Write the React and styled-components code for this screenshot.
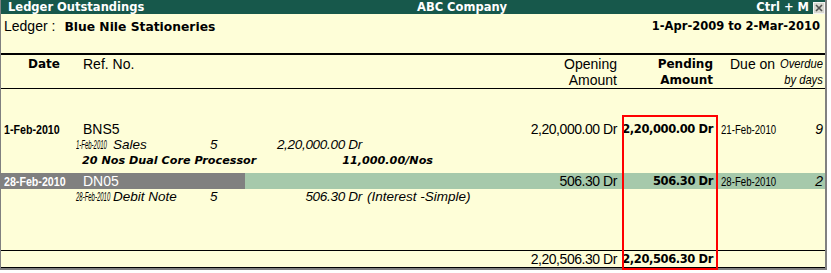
import React from 'react'
import styled, { createGlobalStyle } from 'styled-components'

const SANS = `"Liberation Sans", Arial, sans-serif`
const HEAVY = `"DejaVu Sans", Verdana, sans-serif`

const GlobalStyle = createGlobalStyle`
  html, body {
    margin: 0;
    padding: 0;
    background: #ffffff;
  }
`

const Frame = styled.div`
  position: relative;
  box-sizing: border-box;
  width: 827px;
  height: 270px;
  background: #fefed8;
  border-left: 1px solid #808080;
  border-right: 2px solid #808080;
  border-bottom: 2px solid #808080;
  display: flex;
  flex-direction: column;
  color: #000;
  font: 14px/16px ${SANS};
`

const TitleBar = styled.div`
  height: 14px;
  background: #17584b;
  color: #fff;
  display: grid;
  grid-template-columns: 409px 1fr;
  padding-left: 7px;
  font: bold 11.5px/14px ${HEAVY};
  white-space: nowrap;
`

const TitleRight = styled.div`
  display: flex;
  align-items: center;
  gap: 4px;

  span:first-child {
    flex: 1;
  }
`

const CloseBox = styled.span`
  display: flex;
  width: 12px;
  height: 12px;
  margin-top: 1px;
  svg {
    display: block;
  }
`

const InfoRow = styled.div`
  height: 39px;
  box-sizing: border-box;
  padding: 4px 5px 0 3px;
  display: flex;
  justify-content: space-between;
  align-items: flex-start;
  white-space: nowrap;
`

const Label = styled.span`
  font: 14px/16px ${SANS};
`

const Strong = styled.span`
  font: bold ${p => p.$size || 11.5}px/16px ${HEAVY};
  margin-left: ${p => p.$gap || 0}px;
`

const Rule = styled.div`
  height: ${p => p.$weight}px;
  background: #000;
  flex: none;
`

const Columns = styled.div`
  display: grid;
  grid-template-columns: 82px 1fr 100px 98px 60px 48px;
  white-space: nowrap;
`

const HeaderGrid = styled(Columns)`
  height: 33px;
  box-sizing: border-box;
  padding-top: 1px;
`

const HeadCell = styled.div`
  display: flex;
  flex-direction: column;
  align-items: ${p => (p.$right ? 'flex-end' : 'flex-start')};
  padding-left: ${p => p.$pl || 0}px;
  padding-right: ${p => p.$pr || 0}px;
  font: ${p => (p.$bold ? `bold 12px/16px ${HEAVY}` : `14px/16px ${SANS}`)};
`

const Body = styled.div`
  flex: 1;
  padding-top: 32px;
`

const EntryRow = styled(Columns)`
  height: 16px;
  margin-top: ${p => p.$mt || 0}px;
  background: ${p =>
    p.$selected ? 'linear-gradient(to right, #808080 244px, #a6c9ab 244px)' : 'transparent'};
  color: #000;
`

const Cell = styled.div`
  text-align: ${p => (p.$right ? 'right' : 'left')};
  padding-left: ${p => p.$pl || 0}px;
  padding-right: ${p => p.$pr || 0}px;
  color: ${p => (p.$light ? '#fff' : 'inherit')};
  font: ${p =>
    p.$bold ? `bold 11.5px/16px ${HEAVY}` : p.$italic ? `italic 14px/16px ${SANS}` : `14px/16px ${SANS}`};
  letter-spacing: ${p => (p.$bold ? '-0.4px' : p.$tight ? '-0.45px' : 'normal')};
`

const Squeeze = styled.span`
  display: inline-block;
  transform: scaleX(${p => p.$x});
  transform-origin: ${p => (p.$right ? 'right' : 'left')} center;
  font-size: ${p => p.$size}px;
  font-weight: ${p => (p.$bold ? 'bold' : 'normal')};
  font-style: ${p => (p.$italic ? 'italic' : 'normal')};
  font-family: ${SANS};
  letter-spacing: normal;
`

const DetailRow = styled.div`
  height: 16px;
  display: grid;
  grid-template-columns: 37px 97px 60px 92px auto;
  padding-left: 75px;
  font: italic 13.5px/16px ${SANS};
  white-space: nowrap;

  > :nth-child(4) {
    text-align: right;
    letter-spacing: -0.3px;
  }
  > :nth-child(5) {
    padding-left: 5px;
  }
`

const ItemRow = styled.div`
  height: 16px;
  width: 432px;
  box-sizing: border-box;
  padding-left: 81px;
  display: flex;
  justify-content: space-between;
  font: italic bold 11.2px/16px ${HEAVY};
  white-space: nowrap;
`

const Footer = styled(Columns)`
  height: 16px;
`

const Marker = styled.div`
  position: absolute;
  left: 621px;
  top: 115px;
  width: 96px;
  height: 155px;
  box-sizing: border-box;
  border: 2px solid #ff0000;
  pointer-events: none;
`

function Close() {
  return (
    <CloseBox>
      <svg width="12" height="12" viewBox="0 0 12 12">
        <rect x="0.5" y="0.5" width="11" height="11" fill="#d8d8d0" stroke="#f4f4f4" />
        <path d="M3 3 L9 9 M9 3 L3 9" stroke="#505050" strokeWidth="1.6" />
      </svg>
    </CloseBox>
  )
}

const entries = [
  {
    date: '1-Feb-2010',
    ref: 'BNS5',
    opening: '2,20,000.00 Dr',
    pending: '2,20,000.00 Dr',
    due: '21-Feb-2010',
    overdue: '9',
    detail: { date: '1-Feb-2010', type: 'Sales', qty: '5', amount: '2,20,000.00 Dr', note: '' },
    item: { desc: '20 Nos Dual Core Processor', rate: '11,000.00/Nos' },
  },
  {
    date: '28-Feb-2010',
    ref: 'DN05',
    opening: '506.30 Dr',
    pending: '506.30 Dr',
    due: '28-Feb-2010',
    overdue: '2',
    selected: true,
    detail: { date: '28-Feb-2010', type: 'Debit Note', qty: '5', amount: '506.30 Dr', note: '(Interest -Simple)' },
  },
]

export default function App() {
  return (
    <>
      <GlobalStyle />
      <Frame>
        <TitleBar>
          <span>Ledger Outstandings</span>
          <TitleRight>
            <span>ABC Company</span>
            <span>Ctrl + M</span>
            <Close />
          </TitleRight>
        </TitleBar>

        <InfoRow>
          <div>
            <Label>Ledger :</Label>
            <Strong $gap={9} $size={12.3}>Blue Nile Stationeries</Strong>
          </div>
          <Strong>1-Apr-2009 to 2-Mar-2010</Strong>
        </InfoRow>

        <Rule $weight={2} />

        <HeaderGrid>
          <HeadCell $bold $pl={27}>Date</HeadCell>
          <HeadCell>Ref. No.</HeadCell>
          <HeadCell $right $pr={2}>
            <span>Opening</span>
            <span>Amount</span>
          </HeadCell>
          <HeadCell $right $bold $pr={4}>
            <span>Pending</span>
            <span>Amount</span>
          </HeadCell>
          <HeadCell $pl={13}>Due on</HeadCell>
          <HeadCell $right $pr={2}>
            <Squeeze $x={0.86} $right $italic $size={13}>Overdue</Squeeze>
            <Squeeze $x={0.86} $right $italic $size={13}>by days</Squeeze>
          </HeadCell>
        </HeaderGrid>

        <Rule $weight={1} />

        <Body>
          {entries.map((e, i) => (
            <React.Fragment key={e.ref}>
              <EntryRow $selected={e.selected} $mt={i > 0 ? 4 : 0}>
                <Cell $pl={3} $light={e.selected}>
                  <Squeeze $x={0.82} $bold $size={13}>{e.date}</Squeeze>
                </Cell>
                <Cell $light={e.selected}>{e.ref}</Cell>
                <Cell $right $tight $pr={2}>{e.opening}</Cell>
                <Cell $right $bold $pr={4}>{e.pending}</Cell>
                <Cell $pl={4}>
                  <Squeeze $x={0.74} $size={13}>{e.due}</Squeeze>
                </Cell>
                <Cell $right $italic $pr={2}>{e.overdue}</Cell>
              </EntryRow>
              <DetailRow>
                <span>
                  <Squeeze $x={0.46} $italic $size={13}>{e.detail.date}</Squeeze>
                </span>
                <span>{e.detail.type}</span>
                <span>{e.detail.qty}</span>
                <span>{e.detail.amount}</span>
                <span>{e.detail.note}</span>
              </DetailRow>
              {e.item && (
                <ItemRow>
                  <span>{e.item.desc}</span>
                  <span>{e.item.rate}</span>
                </ItemRow>
              )}
            </React.Fragment>
          ))}
        </Body>

        <Rule $weight={1} />
        <Footer>
          <Cell />
          <Cell />
          <Cell $right $tight $pr={2}>2,20,506.30 Dr</Cell>
          <Cell $right $bold $pr={4}>2,20,506.30 Dr</Cell>
          <Cell />
          <Cell />
        </Footer>
        <Rule $weight={1} />

        <Marker />
      </Frame>
    </>
  )
}
